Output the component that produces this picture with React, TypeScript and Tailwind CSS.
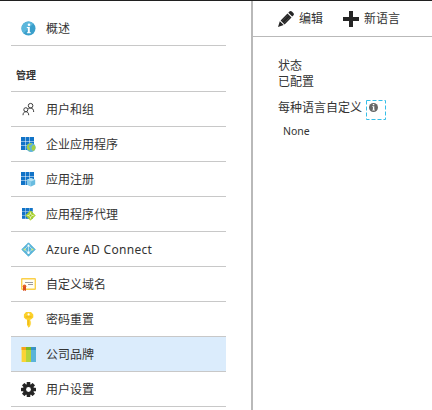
import type { ReactNode } from 'react';

const cells = [0, 1, 2].flatMap((r) => [0, 1, 2].map((c) => [c, r]));

function AppGrid({ size = 4, step = 4.5, x = 0, y = 0 }: { size?: number; step?: number; x?: number; y?: number }) {
  return (
    <>
      {cells.map(([c, r]) => (
        <rect key={`${c}${r}`} x={x + c * step} y={y + r * step} width={size} height={size} fill="#1173c7" />
      ))}
    </>
  );
}

function Icon({ children }: { children: ReactNode }) {
  return (
    <svg viewBox="0 0 16 16" className="h-4 w-4 shrink-0">
      {children}
    </svg>
  );
}

const InfoIcon = (
  <Icon>
    <circle cx="7.5" cy="7.5" r="7" fill="#3a9fcb" />
    <path d="M2.5 12.4A7 7 0 0 1 12.4 2.5Z" fill="#5cb7dc" />
    <circle cx="8" cy="3.8" r="1.3" fill="#fff" />
    <path d="M5.8 6h3v5.2h1v1.1H5.9v-1.1h.9V7.1h-1Z" fill="#fff" />
  </Icon>
);

const UsersIcon = (
  <Icon>
    <g fill="none" stroke="#3c3c3c" strokeWidth="1">
      <circle cx="4.8" cy="7.7" r="2" />
      <path d="M2 13.2c0-2.300 1.200-3.500 2.900-3.500s2.800 1.200 2.800 3.500" />
      <circle cx="9.6" cy="3.7" r="2.300" />
      <path d="M7.2 6.900c.7-.6 1.500-.8 2.400-.8 2 0 3 1.300 3.100 3.900" />
    </g>
  </Icon>
);

const EnterpriseIcon = (
  <Icon>
    <AppGrid />
    <circle cx="10" cy="10.4" r="4.600" fill="#5fb4da" />
    <path d="M6 8.800c1-2.200 3-3 5-2.800l-.8 1.800-1.800.4-.6 1.800 1.400 1.500-.8 2.400C6.500 12.800 5.400 10.800 6 8.800Zm5.500-.2 2.200-.5c1.500 2.300.9 4.500-.8 5.700l-1.700-.4-.8-2.300Z" fill="#a4cf45" />
  </Icon>
);

const RegistrationIcon = (
  <Icon>
    <AppGrid />
    <path d="m10 6 4.200 1.700v4.700L10 14.500l-4.100-2.100V7.700Z" fill="#69bce0" />
    <path d="m10 6 4.200 1.700L10 9.600 5.900 7.700Z" fill="#b7e2f3" />
    <path d="M10 9.600v4.900l-4.100-2.100V7.700Z" fill="#8accea" />
  </Icon>
);

const ProxyIcon = (
  <Icon>
    <AppGrid x={1} y={1} size={3.4} step={3.7} />
    <path d="m9.500 3.900 4.600 4.600-4.600 4.600-4.600-4.600Z" fill="#acd32f" stroke="#acd32f" strokeLinejoin="round" />
    <path d="M9.500 5.300v6.400M6.300 8.500h6.400" stroke="#e9f5ba" strokeWidth=".9" />
    <circle cx="9.500" cy="8.500" r="1.300" fill="#91bd22" stroke="#f0f8d0" strokeWidth=".6" />
  </Icon>
);

const ConnectIcon = (
  <Icon>
    <path d="m7.500.8 6.700 6.700-6.700 6.700L.8 7.500Z" fill="#59b4d9" stroke="#59b4d9" strokeLinejoin="round" />
    <path d="m7.500 3.300 3.900 4.200-3.900 3.200-3.900-3.200ZM7.500 3.500v7.200" fill="none" stroke="#d8f1f8" strokeWidth=".7" />
    <g fill="#fff">
      <circle cx="7.500" cy="3.400" r="1" />
      <circle cx="7.500" cy="10.800" r="1.200" />
    </g>
    <circle cx="3.600" cy="7.500" r="1.100" fill="#d5ed75" />
    <circle cx="11.400" cy="7.500" r="1.100" fill="#d5ed75" />
  </Icon>
);

const DomainIcon = (
  <Icon>
    <rect x=".7" y="1.700" width="13.600" height="10.600" rx=".5" fill="#fffef5" stroke="#fbd04a" strokeWidth="1.400" />
    <path d="M4 5.500h8M7 7.500h5" stroke="#9b9b9b" />
    <circle cx="3.500" cy="9.200" r="1.800" fill="#e86524" />
    <path d="M2 9.500h3V14l-1.500-.8L2 14Z" fill="#d94d1d" />
  </Icon>
);

const KeyIcon = (
  <Icon>
    <path
      fillRule="evenodd"
      d="M5 0h5l2.300 2.500v3L10 7.600H9.300v1.600l1 .9-1 .9 1 .9-1 .9v1.300l-1.700 1.600L6 13.100V7.600H5L2.900 5.500v-3Zm2.600 1.300a1.100 1.100 0 1 0 0 2.200 1.100 1.100 0 0 0 0-2.200Z"
      fill="#fcd12a"
    />
    <path d="M4.600 4.900h6M7.200 8v5" stroke="#e9ad15" strokeWidth=".8" />
  </Icon>
);

const BrandIcon = (
  <Icon>
    <path d="M.6 0H5v15H.6Z" fill="#fcd335" />
    <path d="M5 0h5v15H5Z" fill="#b5d43b" />
    <path d="M10 0h5v15h-5Z" fill="#5ab4d9" />
    <path d="M.6 0H5v3H.6Z" fill="#f8a11b" />
    <path d="M5 0h5v3H5Z" fill="#7aba24" />
    <path d="M10 0h5v3h-5Z" fill="#3792c4" />
  </Icon>
);

const GearIcon = (
  <Icon>
    <g fill="#252525">
      {[0, 45, 90, 135].map((a) => (
        <rect key={a} x="5.700" y="0" width="3.600" height="15" rx=".5" transform={`rotate(${a} 7.500 7.500)`} />
      ))}
      <circle cx="7.500" cy="7.500" r="5.500" />
    </g>
    <circle cx="7.500" cy="7.500" r="2.400" fill="#fff" />
  </Icon>
);

const items: { label: string; icon: ReactNode; selected?: boolean }[] = [
  { label: '用户和组', icon: UsersIcon },
  { label: '企业应用程序', icon: EnterpriseIcon },
  { label: '应用注册', icon: RegistrationIcon },
  { label: '应用程序代理', icon: ProxyIcon },
  { label: 'Azure AD Connect', icon: ConnectIcon },
  { label: '自定义域名', icon: DomainIcon },
  { label: '密码重置', icon: KeyIcon },
  { label: '公司品牌', icon: BrandIcon, selected: true },
  { label: '用户设置', icon: GearIcon },
];

export default function App() {
  return (
    <div className="flex h-[410px] w-[432px] overflow-hidden border-t border-[#202020] bg-white font-['Noto_Sans','Noto_Sans_CJK_SC',sans-serif] text-[12px] text-[#333]">
      <nav className="ml-[11px] w-[215px] shrink-0">
        <div className="flex h-[45px] items-center gap-[9px] border-b border-[#c8c8c8] pt-3 pl-[10px]">
          {InfoIcon}
          <span className="leading-4">概述</span>
        </div>
        <h2 className="h-[46px] border-b border-[#c8c8c8] pt-[21px] pl-[5px] text-[10px] leading-4 font-bold">管理</h2>
        {items.map(({ label, icon, selected }) => (
          <a
            key={label}
            className={`flex h-[35px] items-center gap-[9px] border-b border-[#c8c8c8] pt-0.5 pl-[10px] ${selected ? 'bg-[#dbecfc]' : ''}`}
          >
            {icon}
            <span className={`leading-4 whitespace-nowrap ${label.startsWith('Azure') ? 'tracking-[0.3px]' : ''}`}>{label}</span>
          </a>
        ))}
      </nav>
      <main className="ml-[25px] flex-1 border-l-2 border-[#b9b9b9]">
        <div className="flex h-9 items-center border-b border-[#b9b9b9] pt-px pl-[25px]">
          <svg viewBox="0 0 16 16" className="h-4 w-4" fill="#252525">
            <path d="m1.800 10.200 3.900 3.900L0 16ZM2.600 9.400l6.900-6.900 4 4-6.900 6.900ZM10.300 1.700l1.100-1.100c.8-.8 1.700-.8 2.500 0l1.400 1.400c.8.8.8 1.700 0 2.500l-1.100 1.100Z" />
            <path d="m4.300 9.900 5.600-5.600M6.300 11.800l5.500-5.500" stroke="#777" strokeWidth=".4" />
          </svg>
          <span className="ml-[5px]">编辑</span>
          <svg viewBox="0 0 16 16" className="ml-5 h-4 w-4" fill="#252525">
            <path d="M6 0h4v6h6v4h-6v6H6v-6H0V6h6Z" />
          </svg>
          <span className="ml-[5px]">新语言</span>
        </div>
        <div className="pt-[21px] pl-[25px]">
          <div className="leading-4">状态</div>
          <div className="leading-[15px]">已配置</div>
          <div className="mt-[11px] flex h-5 items-start">
            <span className="w-[88px] leading-4">每种语言自定义</span>
            <svg viewBox="0 0 20 20" className="h-5 w-5">
              <rect x=".5" y=".5" width="19" height="19" fill="none" stroke="#35bee8" strokeDasharray="4 2" />
              <circle cx="7.500" cy="7.500" r="4.500" fill="#666" />
              <path d="M6.800 4h1.500v1.300H6.800ZM6.300 6.300h2v3.500h.6v.8H6.300v-.8h.6V7.100h-.6Z" fill="#fff" />
            </svg>
          </div>
          <div className="mt-[3px] ml-[5px] text-[10.500px] leading-4">None</div>
        </div>
      </main>
    </div>
  );
}
